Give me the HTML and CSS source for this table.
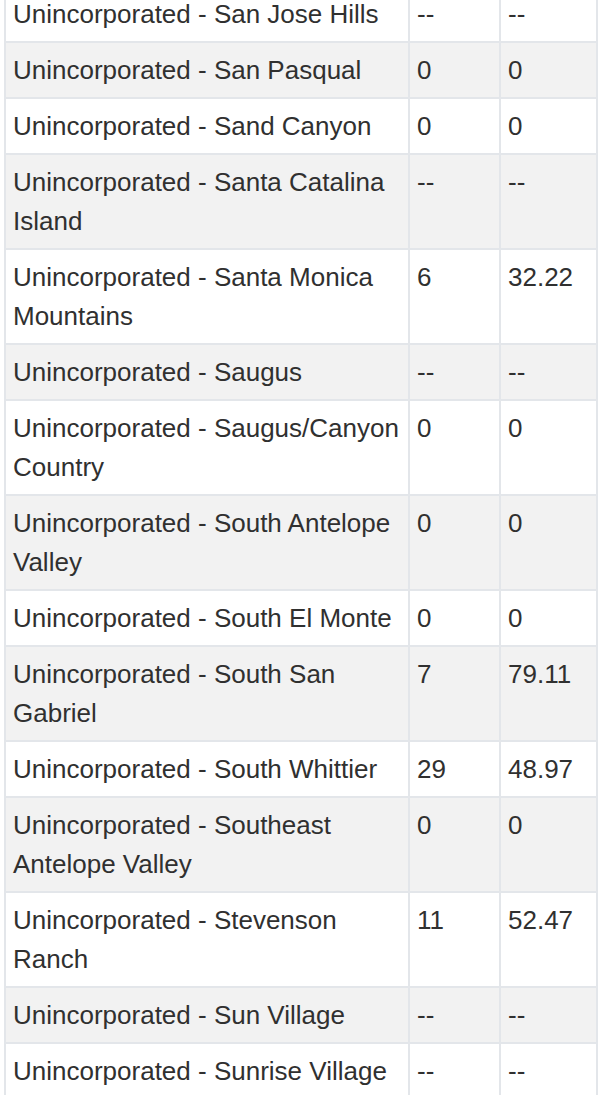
FILE: index.html
```html
<!DOCTYPE html>
<html>
<head>
<meta charset="utf-8">
<link rel="stylesheet" href="styles.css">
</head>
<body>
<table class="data">
  <colgroup>
    <col class="c-name">
    <col class="c-count">
    <col class="c-rate">
  </colgroup>
  <tbody>
    <tr><td>Unincorporated - San Jose Hills</td><td>--</td><td>--</td></tr>
    <tr><td>Unincorporated - San Pasqual</td><td>0</td><td>0</td></tr>
    <tr><td>Unincorporated - Sand Canyon</td><td>0</td><td>0</td></tr>
    <tr><td>Unincorporated - Santa Catalina Island</td><td>--</td><td>--</td></tr>
    <tr><td>Unincorporated - Santa Monica Mountains</td><td>6</td><td>32.22</td></tr>
    <tr><td>Unincorporated - Saugus</td><td>--</td><td>--</td></tr>
    <tr><td>Unincorporated - Saugus/Canyon Country</td><td>0</td><td>0</td></tr>
    <tr><td>Unincorporated - South Antelope Valley</td><td>0</td><td>0</td></tr>
    <tr><td>Unincorporated - South El Monte</td><td>0</td><td>0</td></tr>
    <tr><td>Unincorporated - South San Gabriel</td><td>7</td><td>79.11</td></tr>
    <tr><td>Unincorporated - South Whittier</td><td>29</td><td>48.97</td></tr>
    <tr><td>Unincorporated - Southeast Antelope Valley</td><td>0</td><td>0</td></tr>
    <tr><td>Unincorporated - Stevenson Ranch</td><td>11</td><td>52.47</td></tr>
    <tr><td>Unincorporated - Sun Village</td><td>--</td><td>--</td></tr>
    <tr><td>Unincorporated - Sunrise Village</td><td>--</td><td>--</td></tr>
  </tbody>
</table>
</body>
</html>
```

FILE: styles.css
```css
html, body {
  margin: 0;
  padding: 0;
  background: #ffffff;
}

body {
  font-family: "Liberation Sans", Arial, Helvetica, sans-serif;
  color: #303030;
  overflow: hidden;
}

.data {
  border-collapse: collapse;
  table-layout: fixed;
  width: 592px;
  margin: -15px 0 0 4px;
  border: 2px solid #e3e6ea;
  font-size: 26px;
  line-height: 39px;
}

.c-name { width: 404px; }
.c-count { width: 91px; }
.c-rate { width: 97px; }

.data td {
  border: 2px solid #e3e6ea;
  padding: 7.5px 7px;
  vertical-align: top;
  text-align: left;
}

.data tr:nth-child(even) td {
  background: #f2f2f2;
}
```
